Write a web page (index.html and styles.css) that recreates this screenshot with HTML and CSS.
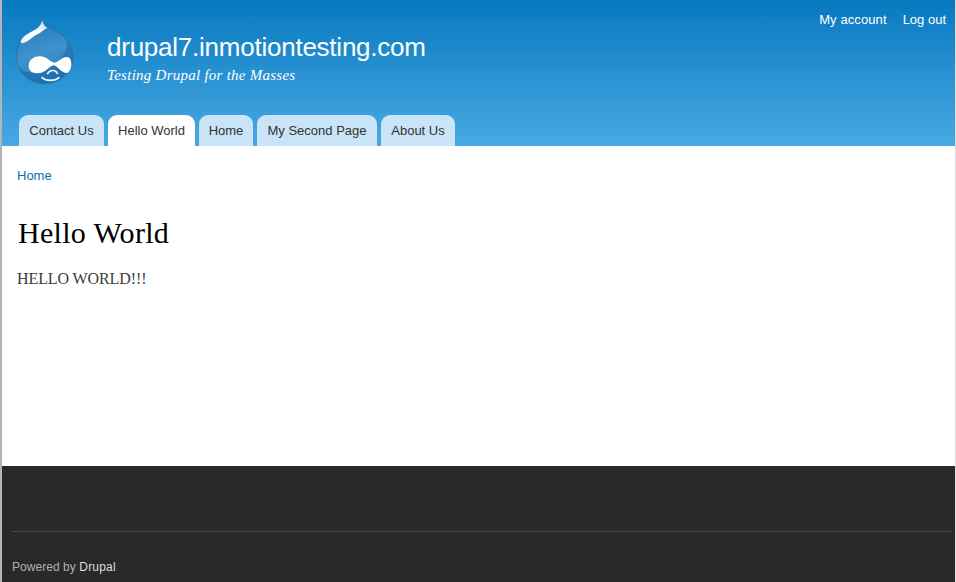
FILE: index.html
```html
<!DOCTYPE html>
<html lang="en">
<head>
<meta charset="utf-8">
<title>Hello World | drupal7.inmotiontesting.com</title>
<link rel="stylesheet" href="styles.css">
</head>
<body>
<div class="page">
  <header class="header">
    <div class="branding">
      <svg class="logo" viewBox="45 24 180 204" aria-hidden="true">
        <defs>
          <linearGradient id="drop" x1="0.3" y1="0" x2="0.6" y2="1">
            <stop offset="0" stop-color="#2579b9"/>
            <stop offset="0.5" stop-color="#3f92cc"/>
            <stop offset="1" stop-color="#2b7ebb"/>
          </linearGradient>
          <linearGradient id="shine" x1="1" y1="0" x2="0" y2="1">
            <stop offset="0" stop-color="#fff" stop-opacity="0.7"/>
            <stop offset="0.5" stop-color="#fff"/>
            <stop offset="1" stop-color="#fff" stop-opacity="0.9"/>
          </linearGradient>
        </defs>
        <path d="M127 31C133 49 151 55 171 66C201 82 219 109 219 139C219 186 181 221 135 221C88 221 50 187 50 141C50 111 61 91 82 76C103 62 123 55 127 31Z" fill="url(#drop)" stroke="#2f72a4" stroke-width="3"/>
        <path d="M199 91C211 104 218 122 218 139C218 185 181 220 135 220C101 220 72 202 58 175C88 198 132 190 163 163C190 141 206 117 199 91Z" fill="#09599c" opacity="0.38"/>
        <path d="M127 31C130 44 134 51 143 54C133 57 125 67 114 72C102 77 92 87 82 94C74 99 66 101 63 98C60 92 69 79 84 71C104 60 122 54 127 31Z" fill="url(#shine)"/>
        <path d="M86 168C86 149 102 139 119 139C140 139 149 155 163 158C175 157 184 141 201 141C211 141 215 153 214 166C212 180 207 189 198 189C183 188 175 170 162 166C146 168 138 190 113 190C96 190 86 182 86 168Z" fill="#fff"/>
        <path d="M143 191C149 179 166 178 172 190M126 203C138 214 164 214 177 203" fill="none" stroke="#f2faff" stroke-width="5" stroke-linecap="round"/>
      </svg>
      <div class="names">
        <div class="site-name"><span>drupal7.inmotiontesting.com</span></div>
        <div class="slogan"><span>Testing Drupal for the Masses</span></div>
      </div>
      <nav class="user-menu"><a class="account">My account</a><a>Log out</a></nav>
    </div>
    <nav class="tabs">
      <a class="tab contact">Contact Us</a>
      <a class="tab hello active">Hello World</a>
      <a class="tab home">Home</a>
      <a class="tab second">My Second Page</a>
      <a class="tab about">About Us</a>
    </nav>
  </header>
  <main class="content">
    <div class="breadcrumb"><a>Home</a></div>
    <h1>Hello World</h1>
    <p>HELLO WORLD!!!</p>
  </main>
  <footer class="footer">
    <div class="credit">Powered by <a>Drupal</a></div>
  </footer>
</div>
</body>
</html>
```
FILE: styles.css
```css
* { box-sizing: border-box; }
body {
  margin: 0;
  height: 582px;
  overflow: hidden;
  background: #fff;
  font: 13px/16px "Liberation Sans", Arial, sans-serif;
}
.page {
  height: 582px;
  display: flex;
  flex-direction: column;
  border-left: 2px solid #b5b5b5;
  border-right: 1px solid #dcdcdc;
}
.header {
  height: 146px;
  display: flex;
  flex-direction: column;
  justify-content: space-between;
  background: linear-gradient(#0779bf, #48a9e4);
}
.branding { display: flex; align-items: flex-start; color: #fff; }
.logo { width: 60px; height: 68px; margin: 18px 0 0 13px; }
.names { margin: 32px 0 0 32px; }
.site-name { font-size: 26px; line-height: 31px; letter-spacing: -0.24px; }
.slogan {
  margin-top: 4px;
  font: italic 15px/17px "Liberation Serif", Georgia, serif;
  letter-spacing: 0.25px;
}
.user-menu { display: flex; gap: 16px; margin: 12px 9px 0 auto; }
.account { letter-spacing: 0.1px; }
.tabs { display: flex; gap: 4px; padding-left: 17px; }
.tab {
  height: 31px;
  padding-top: 8px;
  text-align: center;
  white-space: nowrap;
  color: #333;
  background: #c8e4f6;
  border-radius: 9px 9px 0 0;
}
.tab.active { background: #fff; }
.contact { width: 85px; }
.hello { width: 87px; }
.home { width: 54px; }
.second { width: 120px; }
.about { width: 74px; }
.content { height: 320px; padding: 22px 15px 0; }
.breadcrumb { color: #0071b3; }
h1 {
  margin: 31px 0 0 1px;
  font: 30px/36px "Liberation Serif", Georgia, serif;
  letter-spacing: 0.3px;
  color: #000;
}
p {
  margin: 18px 0 0;
  font: 16px/20px "Liberation Serif", Georgia, serif;
  letter-spacing: -0.1px;
  color: #3b3b3b;
}
.footer { flex: 1; padding: 65px 3px 0 10px; background: #292929; }
.credit {
  padding-top: 27px;
  border-top: 1px solid #484848;
  font-size: 12px;
  letter-spacing: 0.05px;
  color: #b0b0b0;
}
.credit a { color: #dedede; letter-spacing: 0.2px; }
```
